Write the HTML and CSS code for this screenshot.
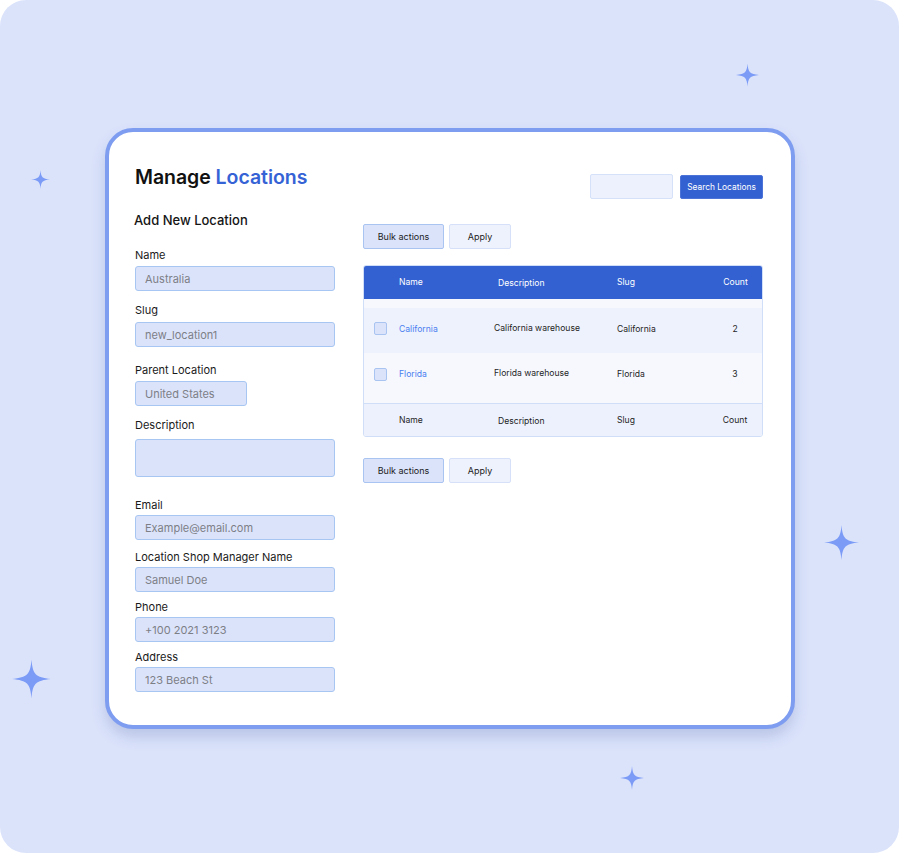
FILE: index.html
```html
<!DOCTYPE html>
<html>
<head>
<meta charset="utf-8">
<link rel="stylesheet" href="styles.css">
</head>
<body>
<div class="stage">
  <svg class="spark s1" viewBox="-1 -1 2 2"><path d="M0,-1 C0.06,-0.25 0.2,-0.08 1,0 C0.2,0.08 0.06,0.25 0,1 C-0.06,0.25 -0.2,0.08 -1,0 C-0.2,-0.08 -0.06,-0.25 0,-1Z"/></svg>
  <svg class="spark s2" viewBox="-1 -1 2 2"><path d="M0,-1 C0.06,-0.25 0.2,-0.08 1,0 C0.2,0.08 0.06,0.25 0,1 C-0.06,0.25 -0.2,0.08 -1,0 C-0.2,-0.08 -0.06,-0.25 0,-1Z"/></svg>
  <svg class="spark s3" viewBox="-1 -1 2 2"><path d="M0,-1 C0.06,-0.25 0.2,-0.08 1,0 C0.2,0.08 0.06,0.25 0,1 C-0.06,0.25 -0.2,0.08 -1,0 C-0.2,-0.08 -0.06,-0.25 0,-1Z"/></svg>
  <svg class="spark s4" viewBox="-1 -1 2 2"><path d="M0,-1 C0.06,-0.25 0.2,-0.08 1,0 C0.2,0.08 0.06,0.25 0,1 C-0.06,0.25 -0.2,0.08 -1,0 C-0.2,-0.08 -0.06,-0.25 0,-1Z"/></svg>
  <svg class="spark s5" viewBox="-1 -1 2 2"><path d="M0,-1 C0.06,-0.25 0.2,-0.08 1,0 C0.2,0.08 0.06,0.25 0,1 C-0.06,0.25 -0.2,0.08 -1,0 C-0.2,-0.08 -0.06,-0.25 0,-1Z"/></svg>

  <div class="card">
    <div class="head">
      <h1 class="title">Manage <span class="accent">Locations</span></h1>
      <div class="search">
        <input class="search-input" type="text">
        <button class="btn-primary">Search Locations</button>
      </div>
    </div>
    <div class="body">
      <div class="form">
        <h2 class="form-title">Add New Location</h2>
        <div class="field f1"><label>Name</label><input class="in" placeholder="Australia"></div>
        <div class="field f2"><label>Slug</label><input class="in" placeholder="new_location1"></div>
        <div class="field f3"><label>Parent Location</label><input class="in short" placeholder="United States"></div>
        <div class="field f4"><label>Description</label><textarea class="in area"></textarea></div>
        <div class="field f5"><label>Email</label><input class="in" placeholder="Example@email.com"></div>
        <div class="field f6"><label>Location Shop Manager Name</label><input class="in" placeholder="Samuel Doe"></div>
        <div class="field f7"><label>Phone</label><input class="in" placeholder="+100 2021 3123"></div>
        <div class="field f8"><label>Address</label><input class="in" placeholder="123 Beach St"></div>
      </div>
      <div class="list">
        <div class="actions">
          <button class="btn-bulk">Bulk actions</button>
          <button class="btn-apply">Apply</button>
        </div>
        <div class="table">
          <div class="row thead">
            <span></span><span>Name</span><span class="hd">Description</span><span>Slug</span><span class="count">Count</span>
          </div>
          <div class="spacer"></div>
          <div class="row r1">
            <span class="cb"><i class="box"></i></span><a class="link">California</a><span class="desc">California warehouse</span><span>California</span><span class="count">2</span>
          </div>
          <div class="row r2">
            <span class="cb"><i class="box"></i></span><a class="link">Florida</a><span class="desc">Florida warehouse</span><span>Florida</span><span class="count">3</span>
          </div>
          <div class="row tfoot">
            <span></span><span>Name</span><span class="hd">Description</span><span>Slug</span><span class="count">Count</span>
          </div>
        </div>
        <div class="actions bottom">
          <button class="btn-bulk">Bulk actions</button>
          <button class="btn-apply">Apply</button>
        </div>
      </div>
    </div>
  </div>
</div>
</body>
</html>
```
FILE: styles.css
```css
* { box-sizing: border-box; }
html, body { margin: 0; padding: 0; background: #ffffff; }
body { font-family: "Inter", "Liberation Sans", sans-serif; color: #1d1d1f; }

.stage {
  position: relative;
  width: 899px;
  height: 853px;
  background: #dbe3fb;
  border-radius: 26px;
  padding: 128px 0 0 105px;
  overflow: hidden;
}

.spark { position: absolute; fill: #7b9bf6; }
.s1 { left: 736px; top: 61px; width: 23px; height: 28px; }
.s2 { left: 31px; top: 168px; width: 19px; height: 23px; }
.s3 { left: 824px; top: 523px; width: 35px; height: 39px; }
.s4 { left: 12px; top: 658px; width: 39px; height: 42px; }
.s5 { left: 620px; top: 764px; width: 24px; height: 28px; }

.card {
  width: 690px;
  height: 601px;
  background: #ffffff;
  border: 4px solid #7f9df0;
  border-radius: 28px;
  box-shadow: 0 8px 14px rgba(70, 90, 160, 0.22);
  padding: 33px 28px 0 26px;
}

.head { display: flex; justify-content: space-between; align-items: flex-start; }
.title { margin: 0; font-size: 19.5px; line-height: 24px; font-weight: 600; letter-spacing: -0.05px; color: #111; }
.accent { color: #3563d6; }

.search { display: flex; gap: 7px; margin-top: 9px; }
.search-input {
  width: 83px; height: 25px; margin: 0;
  background: #ecf1fd; border: 1px solid #d5e1f8; border-radius: 2px;
}
.btn-primary {
  width: 83px; height: 24px; margin: 1px 0 0;
  background: #3361d1; color: #fff; border: 1px solid #4b73d8; border-radius: 2px;
  font-family: inherit; font-size: 8.4px; padding: 0;
}

.body { display: flex; gap: 28px; margin-top: 12px; }
.form { width: 200px; display: flex; flex-direction: column; }
.form-title { margin: 0 0 18px -1px; font-size: 13px; line-height: 18px; font-weight: 500; color: #151515; }

.field { display: flex; flex-direction: column; }
.field label { font-size: 11px; line-height: 16px; font-weight: 400; color: #1a1a1a; }
.in {
  display: block;
  width: 200px; height: 25px; margin: 3px 0 0;
  background: #dbe3fb; border: 1px solid #a8c6f2; border-radius: 3px;
  padding: 0 9px; font-family: inherit; font-size: 11px; color: #7a7a7a; outline: none;
}
.in::placeholder { color: #7d7f86; }
.short { width: 112px; }
.area { height: 38px; resize: none; margin-top: 6px; }

.f2 { margin-top: 11px; }
.f2 .in { margin-top: 4px; }
.f3 { margin-top: 15px; }
.f4 { margin-top: 11px; }
.f5 { margin-top: 20px; }
.f5 .in, .f6 .in, .f7 .in, .f8 .in { margin-top: 2px; }
.f6 { margin-top: 9px; }
.f7 { margin-top: 7px; }
.f8 { margin-top: 7px; }

.list { width: 400px; padding-top: 13px; }
.actions { display: flex; gap: 5px; }
.actions.bottom { margin-top: 21px; }
.btn-bulk, .btn-apply {
  height: 25px; padding: 0; margin: 0;
  font-family: inherit; font-size: 9px; color: #222; border-radius: 2px;
}
.btn-bulk { width: 81px; background: #dbe3fb; border: 1px solid #a9c4f1; }
.btn-apply { width: 62px; background: #eef2fd; border: 1px solid #d6e0f8; }

.table {
  margin-top: 16px;
  border: 1px solid #d0dff7;
  border-radius: 3px;
  overflow: hidden;
}
.row {
  display: grid;
  grid-template-columns: 35px 95px 123px 90px 1fr;
  align-items: center;
  font-size: 8.6px;
  color: #1e1e1e;
}
.row .count { text-align: center; padding-left: 1px; }
.thead { height: 34px; background: #3361d1; color: #fff; margin: -1px -1px 0; grid-template-columns: 36px 95px 123px 90px 1fr; }
.thead .hd, .tfoot .hd { padding-left: 4px; padding-top: 2px; }
.spacer { height: 9px; background: #f6f8fe; }
.r1 { height: 45px; background: #eef2fd; padding-bottom: 4px; }
.r2 { height: 50px; background: #f6f8fe; padding-bottom: 8px; }
.tfoot { height: 33px; background: #ecf1fd; border-top: 1px solid #d0dff7; }
.cb { display: flex; padding-left: 10px; }
.box {
  width: 13px; height: 13px;
  background: #dbe3fb; border: 1px solid #a9c4f1; border-radius: 2px;
}
.link { color: #4a7ef0; }
.desc { margin-top: -2px; }
```
